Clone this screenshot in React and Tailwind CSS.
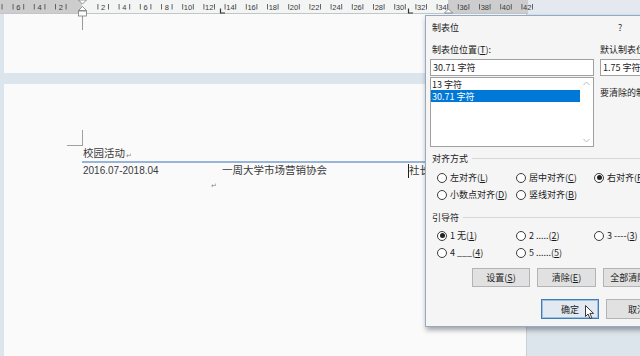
import React from "react";

const U = 10.6;
const ORIGIN = 82;

function Ruler() {
  const right = [];
  for (let n = 2; n <= 42; n += 2) right.push(n);
  const left = [6, 4, 2];
  const items = [
    ...left.map((n) => ({ n, x: ORIGIN - n * U })),
    ...right.map((n) => ({ n, x: ORIGIN + n * U })),
  ];
  return (
    <svg width="640" height="18" className="block absolute left-0 top-0" style={{ overflow: "visible" }}>
      <rect x="0" y="0" width="82" height="13" fill="#cdcdcd" />
      <rect x="82" y="0" width="366" height="13" fill="#f3f4f4" />
      <rect x="448" y="0" width="80" height="13" fill="#cdcdcd" />
      <rect x="528" y="0" width="112" height="14" fill="#e3e9ee" />
      <line x1="0" y1="13.5" x2="528" y2="13.5" stroke="#c2c6ca" strokeWidth="1" />
      {items.map(({ n, x }) => (
        <g key={n + "-" + x}>
          <line x1={x - 5.3} y1="4" x2={x - 5.3} y2="9.5" stroke="#555" strokeWidth="0.9" />
          <line x1={x + 5.3} y1="4" x2={x + 5.3} y2="9.5" stroke="#555" strokeWidth="0.9" />
          <text
            x={x}
            y="9.8"
            textAnchor="middle"
            fontSize="7.5"
            fontFamily="Liberation Sans, sans-serif"
            fill="#3a3a3a"
          >
            {n}
          </text>
        </g>
      ))}
      <line x1="2" y1="4" x2="2" y2="9.5" stroke="#555" strokeWidth="0.9" />
      {/* tab stops */}
      <path d="M220.5 8.5 V13 H225" stroke="#333" strokeWidth="1.2" fill="none" />
      <path d="M408.5 8.5 V13 H413" stroke="#333" strokeWidth="1.2" fill="none" />
      {/* indent marker */}
      <path d="M78.5 0 H86.5 L82.5 4 Z" fill="#fff" stroke="#7a7a7a" strokeWidth="0.8" />
      <path d="M82.5 6.5 L86.5 10.5 H78.5 Z" fill="#fff" stroke="#7a7a7a" strokeWidth="0.8" />
      <rect x="78.5" y="11" width="8" height="5" fill="#fff" stroke="#7a7a7a" strokeWidth="0.8" />
      {/* right indent */}
      <path d="M448.5 9 L452.5 13 H444.5 Z" fill="#fff" stroke="#7a7a7a" strokeWidth="0.8" />
    </svg>
  );
}

function Radio({ checked, children }) {
  return (
    <div className="flex items-center gap-[3px] whitespace-nowrap">
      <span className="w-[10px] h-[10px] rounded-full border border-[#3c3c3c] bg-white flex items-center justify-center shrink-0">
        {checked && <span className="w-[5px] h-[5px] rounded-full bg-[#222]" />}
      </span>
      <span>{children}</span>
    </div>
  );
}

function Btn({ w, children, primary }) {
  return (
    <div
      className={
        "h-full flex items-center justify-center shrink-0 border " +
        (primary
          ? "border-[#3f7cb5] bg-[#e2e9f1] shadow-[inset_0_0_0_1px_#9fc1e0]"
          : "border-[#b4b4b4] bg-[#e1e1e1]")
      }
      style={{ width: w }}
    >
      {children}
    </div>
  );
}

function Dialog() {
  return (
    <div className="absolute left-[425px] top-[15px] w-[260px] h-[312px] bg-[#f5f5f5] border border-[#93abc6] shadow-[1px_3px_5px_rgba(0,0,0,0.35)] font-['Noto_Sans_CJK_SC',sans-serif] text-[9px] leading-none text-[#1b1b1b] flex flex-col">
      <div className="h-[23px] flex items-center pl-[6px]">
        <span className="w-[186px]">制表位</span>
        <span className="text-[#333]">?</span>
      </div>
      <div className="flex">
        <div className="ml-[4px] w-[164px] flex flex-col">
          <div className="h-[20px] flex items-center pl-[2px]">
            制表位位置(<u>T</u>):
          </div>
          <div className="h-[17px] border border-[#a0a0a0] bg-white flex items-center px-[2px]">
            30.71 字符
          </div>
          <div className="mt-[1px] h-[70px] border border-[#a0a0a0] bg-white flex">
            <div className="flex-1 flex flex-col">
              <div className="h-[12px] flex items-center px-[1px]">13 字符</div>
              <div className="h-[12px] flex items-center px-[1px] bg-[#0078d7] text-white">30.71 字符</div>
            </div>
            <div className="w-[13px] flex flex-col justify-between items-center py-[3px]">
              <svg width="7" height="5" viewBox="0 0 7 5">
                <path d="M0.5 4 L3.5 1 L6.5 4" stroke="#b8b8b8" strokeWidth="1" fill="none" />
              </svg>
              <svg width="7" height="5" viewBox="0 0 7 5">
                <path d="M0.5 1 L3.5 4 L6.5 1" stroke="#b8b8b8" strokeWidth="1" fill="none" />
              </svg>
            </div>
          </div>
        </div>
        <div className="ml-[6px] flex flex-col">
          <div className="h-[20px] flex items-center whitespace-nowrap">默认制表位(<u>F</u>):</div>
          <div className="h-[17px] w-[60px] border border-[#a0a0a0] bg-white flex items-center px-[2px] whitespace-nowrap">
            1.75 字符
          </div>
          <div className="mt-[12px] whitespace-nowrap">要清除的制表位:</div>
        </div>
      </div>

      <div className="mt-[4px] h-[14px] flex items-center pl-[6px]">
        <span>对齐方式</span>
        <span className="flex-1 h-px bg-[#d8d8d8] ml-[4px]" />
      </div>
      <div className="mt-[4px] pl-[11px] grid grid-cols-[79px_78px_80px]">
        <div className="h-[17px] flex items-center"><Radio>左对齐(<u>L</u>)</Radio></div>
        <div className="h-[17px] flex items-center"><Radio>居中对齐(<u>C</u>)</Radio></div>
        <div className="h-[17px] flex items-center"><Radio checked>右对齐(<u>R</u>)</Radio></div>
        <div className="h-[17px] flex items-center"><Radio>小数点对齐(<u>D</u>)</Radio></div>
        <div className="h-[17px] flex items-center"><Radio>竖线对齐(<u>B</u>)</Radio></div>
        <div />
      </div>

      <div className="mt-[7px] h-[14px] flex items-center pl-[6px]">
        <span>引导符</span>
        <span className="flex-1 h-px bg-[#d8d8d8] ml-[4px]" />
      </div>
      <div className="mt-[3px] pl-[11px] grid grid-cols-[79px_78px_80px]">
        <div className="h-[17px] flex items-center"><Radio checked>1 无(<u>1</u>)</Radio></div>
        <div className="h-[17px] flex items-center"><Radio>2 .....(<u>2</u>)</Radio></div>
        <div className="h-[17px] flex items-center"><Radio>3 ----(<u>3</u>)</Radio></div>
        <div className="h-[17px] flex items-center"><Radio>4 ___(<u>4</u>)</Radio></div>
        <div className="h-[17px] flex items-center"><Radio>5 ......(<u>5</u>)</Radio></div>
        <div />
      </div>

      <div className="mt-[7px] h-[19px] pl-[46px] flex gap-[7px]">
        <Btn w={58}>设置(<u>S</u>)</Btn>
        <Btn w={59}>清除(<u>E</u>)</Btn>
        <Btn w={62}>全部清除(<u>A</u>)</Btn>
      </div>
      <div className="mt-[12px] h-[20px] pl-[115px] flex gap-[7px]">
        <Btn w={58} primary>确定</Btn>
        <Btn w={62}>取消</Btn>
      </div>
    </div>
  );
}

export default function App() {
  return (
    <div className="relative w-[640px] h-[356px] overflow-hidden bg-[#dce5ec]">
      <div className="h-[14px]" />
      <div className="flex flex-col pl-[4px] h-[342px]">
        <div className="w-[523px] h-[59px] bg-[#fafafa] border-r border-[#c9ced3]">
          <div className="ml-[78px] w-px h-[16px] bg-[#9a9a9a]" />
        </div>
        <div className="h-[11px]" />
        <div className="w-[523px] flex-1 bg-[#fafafa] border-r border-[#c9ced3] flex flex-col text-[#3a3a3a]">
          <div className="mt-[46px] ml-[63px] w-[16px] h-[16px] border-r border-b border-[#a0a0a0]" />
          <div className="ml-[79px] h-[15px] flex items-center font-['Noto_Sans_CJK_SC',sans-serif] text-[10.5px] leading-none">
            校园活动<span className="text-[7px] text-[#888] ml-[1px] mt-[3px]">↵</span>
          </div>
          <div className="ml-[78px] h-[2px] bg-[#97b5d9]" />
          <div className="ml-[79px] h-[15px] flex items-center text-[10.5px] leading-none">
            <span className="w-[139px] font-['Liberation_Sans',sans-serif] text-[10px]">2016.07-2018.04</span>
            <span className="w-[186px] font-['Noto_Sans_CJK_SC',sans-serif]">一周大学市场营销协会</span>
            <span className="h-[14px] w-px bg-[#222]" />
            <span className="font-['Noto_Sans_CJK_SC',sans-serif]">社长</span>
          </div>
          <div className="ml-[207px] mt-[4px] text-[7px] text-[#888] leading-none">↵</div>
        </div>
      </div>
      <Ruler />
      <Dialog />
      <svg className="absolute left-[585px] top-[305px]" width="10" height="15" viewBox="0 0 10 15">
        <path d="M0.5 0.5 L0.5 11.5 L3 9 L5 13.5 L6.8 12.7 L4.9 8.4 L8.5 8.4 Z" fill="#fff" stroke="#222" strokeWidth="0.9" strokeLinejoin="round" />
      </svg>
    </div>
  );
}
